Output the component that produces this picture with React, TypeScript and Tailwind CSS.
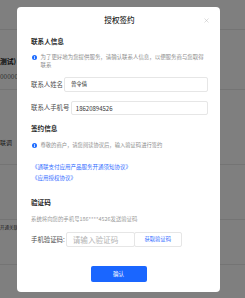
import { X } from 'lucide-react';

// icono azul de info, circulito con la i
const InfoDot = () => (
  <svg width="5" height="5" viewBox="0 0 10 10" className="shrink-0 mt-[1.5px]">
    <circle cx="5" cy="5" r="5" fill="#1d6cff" />
    <rect x="4.2" y="2" width="1.6" height="1.6" fill="#fff" />
    <rect x="4.2" y="4.3" width="1.6" height="3.8" fill="#fff" />
  </svg>
);

export default function App() {
  const font = "font-['Noto_Sans_CJK_SC','Noto_Sans',sans-serif]";
  const heading = "text-[6.6px] leading-[10px] font-bold text-[#262626]";
  const label = "text-[6.4px] leading-[10px] text-[#4d4d4d] shrink-0";
  const box = "border border-[#e6e6e6] rounded-[2px] bg-white flex items-center";

  return (
    <div className={`relative w-[245px] h-[298px] overflow-hidden bg-white ${font}`}>
      {/* pagina de fondo que queda detras del modal */}
      <div className="flex flex-col">
        <div className="h-[30px] border-b border-[#e8e8e8]" />
        <div className="h-[60px] border-b border-[#e8e8e8] flex flex-col pt-[26px]">
          <p className="text-[6.8px] leading-[11px] font-bold text-[#111]">测试)</p>
          <p className="text-[6.5px] leading-[10px] text-[#666] mt-[4px]">00000</p>
        </div>
        <div className="h-[75px] border-b border-[#e8e8e8] flex flex-col pt-[48px]">
          <p className="text-[6px] leading-[9px] text-[#333]">联调</p>
        </div>
        <div className="h-[55px] border-b border-[#e8e8e8]" />
        <div className="h-[45px] border-b border-[#e8e8e8] flex flex-col pt-[4px]">
          <p className="text-[4.5px] leading-[7px] text-[#444]">开通关联</p>
        </div>
      </div>

      {/* capa oscura con el modal */}
      <div className="absolute inset-0 bg-black/50 flex items-start">
        <div className="relative ml-[17px] mt-[7px] w-[203px] h-[285px] bg-white rounded-[4px] flex flex-col pt-[8px] pl-[14px] pr-[12px] pb-[10px]">
          <h3 className="text-center text-[7.6px] leading-[10px] font-medium text-[#262626]">授权签约</h3>
          <X className="absolute right-[10px] top-[10px] text-[#b8b8b8]" size={7} strokeWidth={1.6} />

          <p className={`${heading} mt-[11px]`}>联系人信息</p>
          <div className="flex gap-[4px] mt-[7px] pl-[0.5px]">
            <InfoDot />
            <p className="text-[5.45px] leading-[8px] text-[#8c8c8c]">
              为了更好地为您提供服务，请确认联系人信息，以便服务商与您取得联系
            </p>
          </div>

          <div className="flex items-center mt-[8px]">
            <span className={label}>联系人姓名</span>
            <div className={`${box} ml-[1px] flex-1 h-[15px] pl-[6px]`}>
              <span className="text-[5.4px] text-[#333]">曾令倩</span>
            </div>
          </div>
          <div className="flex items-center mt-[9px]">
            <span className={label}>联系人手机号</span>
            <div className={`${box} ml-[1.5px] flex-1 h-[14px] pl-[4px]`}>
              <span className="text-[6px] text-[#333]">18620894526</span>
            </div>
          </div>

          <p className={`${heading} mt-[8px]`}>签约信息</p>
          <div className="flex gap-[4px] mt-[8px] pl-[0.5px]">
            <InfoDot />
            <p className="text-[5.3px] leading-[8px] text-[#8c8c8c]">尊敬的商户，请您阅读协议后，输入验证码进行签约</p>
          </div>

          <div className="flex flex-col gap-[3px] mt-[14px] ml-[1px]">
            <p className="text-[5.5px] leading-[8px] text-[#2f6bff]">《通联支付应用产品服务开通须知协议》</p>
            <p className="text-[5.5px] leading-[8px] text-[#2f6bff]">《应用授权协议》</p>
          </div>

          <p className={`${heading} mt-[15px]`}>验证码</p>
          <p className="text-[5.4px] leading-[8px] text-[#999] mt-[8px]">系统将向您的手机号186****4526发送验证码</p>

          <div className="flex items-center mt-[9px]">
            <span className={label}>手机验证码:</span>
            <div className={`${box} ml-[1px] w-[69px] h-[15px] pl-[6px]`}>
              <span className="text-[7.6px] text-[#b3b3b3]">请输入验证码</span>
            </div>
            <div className={`${box} ml-[-1px] w-[48px] h-[15px] justify-center`}>
              <span className="text-[5.3px] text-[#2f6bff]">获取验证码</span>
            </div>
          </div>

          <div className="flex justify-center mt-[19px] pr-[2px]">
            <button className="w-[56px] h-[16px] rounded-[2px] bg-[#1a66ff] text-white text-[5.5px] leading-[16px]">
              确认
            </button>
          </div>
        </div>
      </div>
    </div>
  );
}
